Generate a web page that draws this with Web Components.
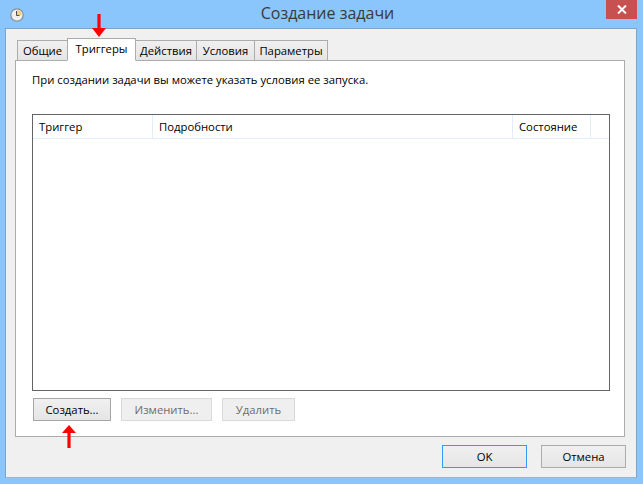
<!DOCTYPE html>
<html>
<head>
<meta charset="utf-8">
<style>
  html, body { margin: 0; height: 100%; }
  body { width: 643px; height: 484px; overflow: hidden; font: 11.3px "Open Sans", "Noto Sans", sans-serif; color: #000; }
</style>
</head>
<body>
<task-dialog caption="Создание задачи">
  <task-tabs slot="tabs">
    <task-tab>Общие</task-tab>
    <task-tab active>Триггеры</task-tab>
    <task-tab>Действия</task-tab>
    <task-tab>Условия</task-tab>
    <task-tab>Параметры</task-tab>
  </task-tabs>
  <trigger-pane slot="pane">
    <span slot="hint">При создании задачи вы можете указать условия ее запуска.</span>
    <trigger-list slot="list"></trigger-list>
    <win-button slot="actions" width="78" hover>Создать...</win-button>
    <win-button slot="actions" width="91" disabled>Изменить...</win-button>
    <win-button slot="actions" width="73" disabled>Удалить</win-button>
  </trigger-pane>
  <win-button slot="footer" width="85" focused>OK</win-button>
  <win-button slot="footer" width="85">Отмена</win-button>
</task-dialog>
<red-arrow dir="down" style="left:92px;top:14px"></red-arrow>
<red-arrow dir="up" style="left:62px;top:425px"></red-arrow>

<script>
class TaskDialog extends HTMLElement {
  constructor() {
    super();
    this.attachShadow({ mode: "open" });
  }
  connectedCallback() {
    this.shadowRoot.innerHTML = `
      <style>
        :host { display: flex; flex-direction: column; width: 643px; height: 484px; box-sizing: border-box; background: #8ac5fb; padding: 0 6px 6px 5px; }
        .titlebar { height: 28px; flex: none; position: relative; display: flex; align-items: flex-start; justify-content: center; margin-right: -6px; margin-left: -5px; }
        .clock { position: absolute; left: 10px; top: 8px; }
        .title { font-size: 16px; line-height: 20px; margin-top: 3px; color: #3a3a3a; padding-left: 12px; }
        .close { position: absolute; left: 606px; top: 0; width: 31px; height: 19px; background: #c75050; display: flex; align-items: center; justify-content: center; }
        .client { flex: 1; display: flex; flex-direction: column; background: #f0f0f0; border: 1px solid #7ea5c8; border-bottom-color: #9db5c8; padding: 9px 11px 9px 9px; min-height: 0; }
        .footer { display: flex; justify-content: flex-end; gap: 14px; margin: 8px -1px 0 0; }
      </style>
      <div class="titlebar">
        <svg class="clock" width="14" height="14" viewBox="0 0 14 14">
          <circle cx="7" cy="7" r="6.2" fill="#eef0f0" stroke="#8a8f94" stroke-width="1.3"/>
          <path d="M7 7V2.2A4.8 4.8 0 0 1 11.8 7Z" fill="#f1cf85"/>
          <path d="M6.5 3v4.5h3" fill="none" stroke="#4a4f55" stroke-width="1"/>
        </svg>
        <div class="title">${this.getAttribute("caption")}</div>
        <div class="close">
          <svg width="10" height="9" viewBox="0 0 10 9"><path d="M1 .5l8 8M9 .5l-8 8" stroke="#fff" stroke-width="2" fill="none"/></svg>
        </div>
      </div>
      <div class="client">
        <slot name="tabs"></slot>
        <slot name="pane"></slot>
        <div class="footer"><slot name="footer"></slot></div>
      </div>`;
  }
}

class TaskTabs extends HTMLElement {
  constructor() {
    super();
    this.attachShadow({ mode: "open" });
    this.shadowRoot.innerHTML = `
      <style>
        :host { display: flex; align-items: flex-end; height: 23px; padding-left: 3px; position: relative; z-index: 1; margin-bottom: -1px; }
      </style>
      <slot></slot>`;
  }
}

const TAB_WIDTHS = { "Общие": 51, "Триггеры": 69, "Действия": 62, "Условия": 59, "Параметры": 74 };

class TaskTab extends HTMLElement {
  constructor() {
    super();
    this.attachShadow({ mode: "open" });
    this.shadowRoot.innerHTML = `
      <style>
        :host { display: flex; align-items: center; justify-content: center; box-sizing: border-box; height: 21px; background: linear-gradient(#f0f0f0, #e5e5e5); border: 1px solid #acacac; margin-left: -1px; color: #000; }
        :host([active]) { height: 23px; background: #fff; border-bottom-color: #fff; position: relative; z-index: 1; padding-bottom: 3px; }
      </style>
      <slot></slot>`;
  }
  connectedCallback() {
    this.style.width = TAB_WIDTHS[this.textContent.trim()] + "px";
  }
}

class TriggerPane extends HTMLElement {
  constructor() {
    super();
    this.attachShadow({ mode: "open" });
    this.shadowRoot.innerHTML = `
      <style>
        :host { display: flex; flex-direction: column; flex: 1; min-height: 0; background: #fff; border: 1px solid #acacac; padding: 10px 14px 15px 16px; }
        .hint { height: 20px; line-height: 18px; margin-bottom: 23px; }
        .actions { display: flex; gap: 10px; margin-top: 7px; padding-left: 1px; }
      </style>
      <div class="hint"><slot name="hint"></slot></div>
      <slot name="list"></slot>
      <div class="actions"><slot name="actions"></slot></div>`;
  }
}

class TriggerList extends HTMLElement {
  constructor() {
    super();
    this.attachShadow({ mode: "open" });
    this.shadowRoot.innerHTML = `
      <style>
        :host { display: block; flex: 1; min-height: 0; background: #fff; border: 1px solid #646464; }
        .head { display: grid; grid-template-columns: 120px 360px 78px 1fr; height: 24px; border-bottom: 1px solid #e4eef9; box-sizing: border-box; }
        .head div { border-right: 1px solid #e4eef9; padding-left: 6px; line-height: 24px; }
        .head div:last-child { border-right: 0; }
      </style>
      <div class="head">
        <div>Триггер</div>
        <div>Подробности</div>
        <div>Состояние</div>
        <div></div>
      </div>`;
  }
}

class WinButton extends HTMLElement {
  constructor() {
    super();
    this.attachShadow({ mode: "open" });
    this.shadowRoot.innerHTML = `
      <style>
        :host { display: flex; align-items: center; justify-content: center; box-sizing: border-box; height: 23px; background: linear-gradient(#f0f0f0, #e5e5e5); border: 1px solid #acacac; color: #000; }
        :host([focused]) { border-color: #3399ff; }
        :host([hover]) { border-color: #a5a5a5; }
        :host([disabled]) { background: #efefef; border-color: #d9d9d9; color: #6d6d6d; }
      </style>
      <slot></slot>`;
  }
  connectedCallback() {
    this.style.width = this.getAttribute("width") + "px";
  }
}

class RedArrow extends HTMLElement {
  constructor() {
    super();
    this.attachShadow({ mode: "open" });
  }
  connectedCallback() {
    const up = this.getAttribute("dir") === "up";
    this.shadowRoot.innerHTML = `
      <style>
        :host { display: block; position: absolute; width: 14px; height: 23px; }
        svg { display: block; }
      </style>
      <svg width="14" height="23" viewBox="0 0 14 23">
        <path d="${up ? "M7 0L14 8H8.6V23H5.4V8H0Z" : "M5.4 0H8.6V14H14L7 23L0 14H5.4Z"}" fill="#f00"/>
      </svg>`;
  }
}

customElements.define("task-dialog", TaskDialog);
customElements.define("task-tabs", TaskTabs);
customElements.define("task-tab", TaskTab);
customElements.define("trigger-pane", TriggerPane);
customElements.define("trigger-list", TriggerList);
customElements.define("win-button", WinButton);
customElements.define("red-arrow", RedArrow);
</script>
</body>
</html>
